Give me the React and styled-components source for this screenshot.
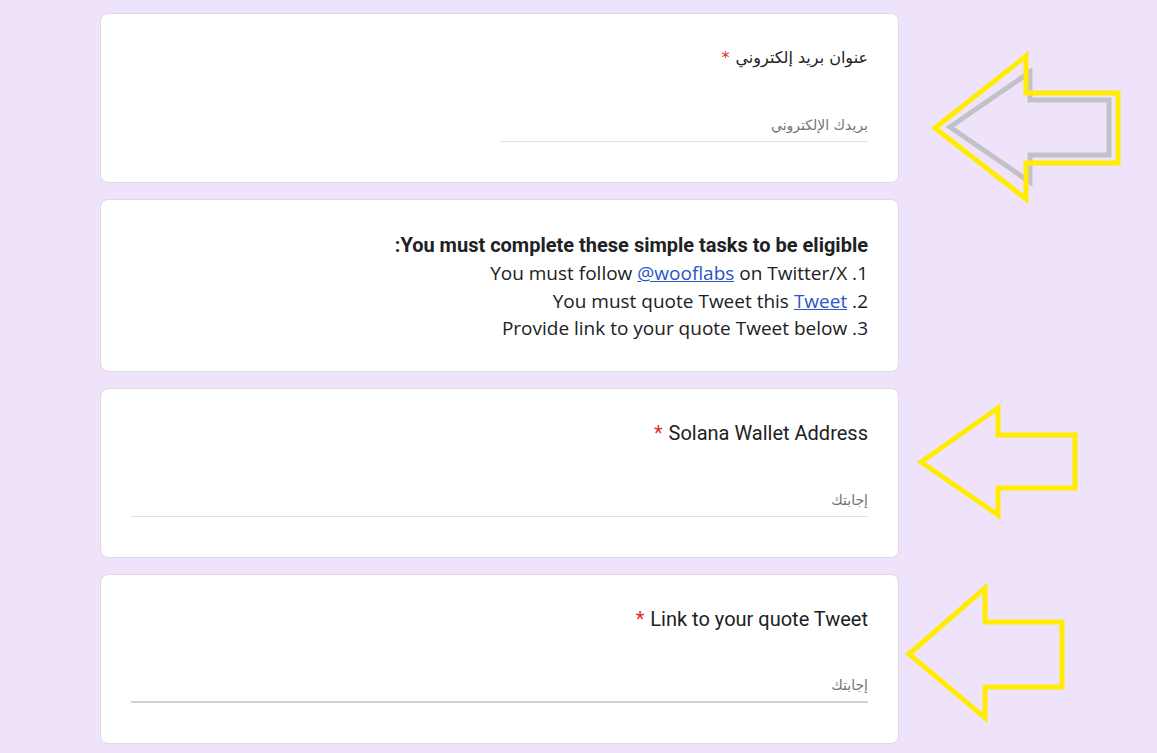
import React from 'react';
import styled, { createGlobalStyle } from 'styled-components';

const GlobalStyle = createGlobalStyle`
  html, body {
    margin: 0;
    padding: 0;
    background: #efe3fc;
  }
  body {
    font-family: Roboto, "Liberation Sans", "DejaVu Sans", sans-serif;
    color: #202124;
  }
`;

const Page = styled.div`
  position: relative;
  width: 1157px;
  height: 753px;
  overflow: hidden;
  padding: 13px 0 0 100px;
  box-sizing: border-box;
`;

const Form = styled.div`
  direction: rtl;
  width: 799px;
  display: flex;
  flex-direction: column;
  gap: 16px;
`;

const Card = styled.div`
  background: #fff;
  border: 1px solid #dadce0;
  border-radius: 8px;
  padding: 30px 30px 40px;
  display: flex;
  flex-direction: column;
  align-items: stretch;
`;

const Title = styled.div`
  font-family: ${(p) => (p.$arabic ? '"DejaVu Sans", "Liberation Sans", sans-serif' : 'Roboto, "Liberation Sans", sans-serif')};
  font-size: ${(p) => (p.$arabic ? '16px' : '20px')};
  line-height: 28px;
  color: #202124;
`;

const Required = styled.span`
  color: #d93025;
  margin-inline-start: 6px;
`;

const Answer = styled.input`
  direction: rtl;
  margin-top: 40px;
  width: ${(p) => (p.$half ? '50%' : '100%')};
  height: 30px;
  box-sizing: border-box;
  border: none;
  border-bottom: ${(p) => (p.$active ? '2px solid #d2d2d2' : '1px solid #e0e0e0')};
  outline: none;
  background: transparent;
  padding: 0 0 3px;
  font-family: "DejaVu Sans", "Liberation Sans", sans-serif;
  font-size: 14px;
  color: #202124;
  &::placeholder {
    color: #70757a;
  }
`;

const Notice = styled(Card)`
  padding-bottom: 28px;
`;

const NoticeHeading = styled.div`
  font-family: Roboto, "Liberation Sans", sans-serif;
  font-weight: 700;
  font-size: 20px;
  line-height: 28px;
  margin: 1px 0 1px;
  color: #202124;
`;

const NoticeLine = styled.div`
  font-family: "Open Sans", Lato, sans-serif;
  font-size: 19px;
  line-height: 27.5px;
  color: #202124;
`;

const Link = styled.a`
  color: #2a56c6;
  text-decoration: underline;
`;

const Overlay = styled.svg`
  position: absolute;
  left: 0;
  top: 0;
  pointer-events: none;
`;

const arrows = [
  {
    shadow: '950,127 1030,72 1030,100 1109,100 1109,155 1030,155 1030,182',
    points: '935,128 1026,56 1026,93 1118,93 1118,163 1026,163 1026,199',
  },
  { points: '921,462 998,408 998,435 1075,435 1075,488 998,488 998,515' },
  { points: '909,654 985,588 985,622 1062,622 1062,687 985,687 985,718' },
];

function Question({ title, arabic, placeholder, half, active }) {
  return (
    <Card>
      <Title $arabic={arabic}>
        {title}
        <Required>*</Required>
      </Title>
      <Answer $half={half} $active={active} placeholder={placeholder} />
    </Card>
  );
}

export default function App() {
  return (
    <>
      <GlobalStyle />
      <Page>
        <Form>
          <Question title="عنوان بريد إلكتروني" arabic placeholder="بريدك الإلكتروني" half />
          <Notice>
            <NoticeHeading>You must complete these simple tasks to be eligible:</NoticeHeading>
            <NoticeLine>
              1. You must follow <Link href="#">@wooflabs</Link> on Twitter/X
            </NoticeLine>
            <NoticeLine>
              2. You must quote Tweet this <Link href="#">Tweet</Link>
            </NoticeLine>
            <NoticeLine>3. Provide link to your quote Tweet below</NoticeLine>
          </Notice>
          <Question title="Solana Wallet Address" placeholder="إجابتك" />
          <Question title="Link to your quote Tweet" placeholder="إجابتك" active />
        </Form>
        <Overlay width="1157" height="753" viewBox="0 0 1157 753">
          {arrows.map((a, i) => (
            <g key={i} fill="none" strokeLinejoin="miter">
              {a.shadow && <polygon points={a.shadow} stroke="#c2c2c6" strokeWidth="5" />}
              <polygon points={a.points} stroke="#ffec00" strokeWidth="5" />
            </g>
          ))}
        </Overlay>
      </Page>
    </>
  );
}
